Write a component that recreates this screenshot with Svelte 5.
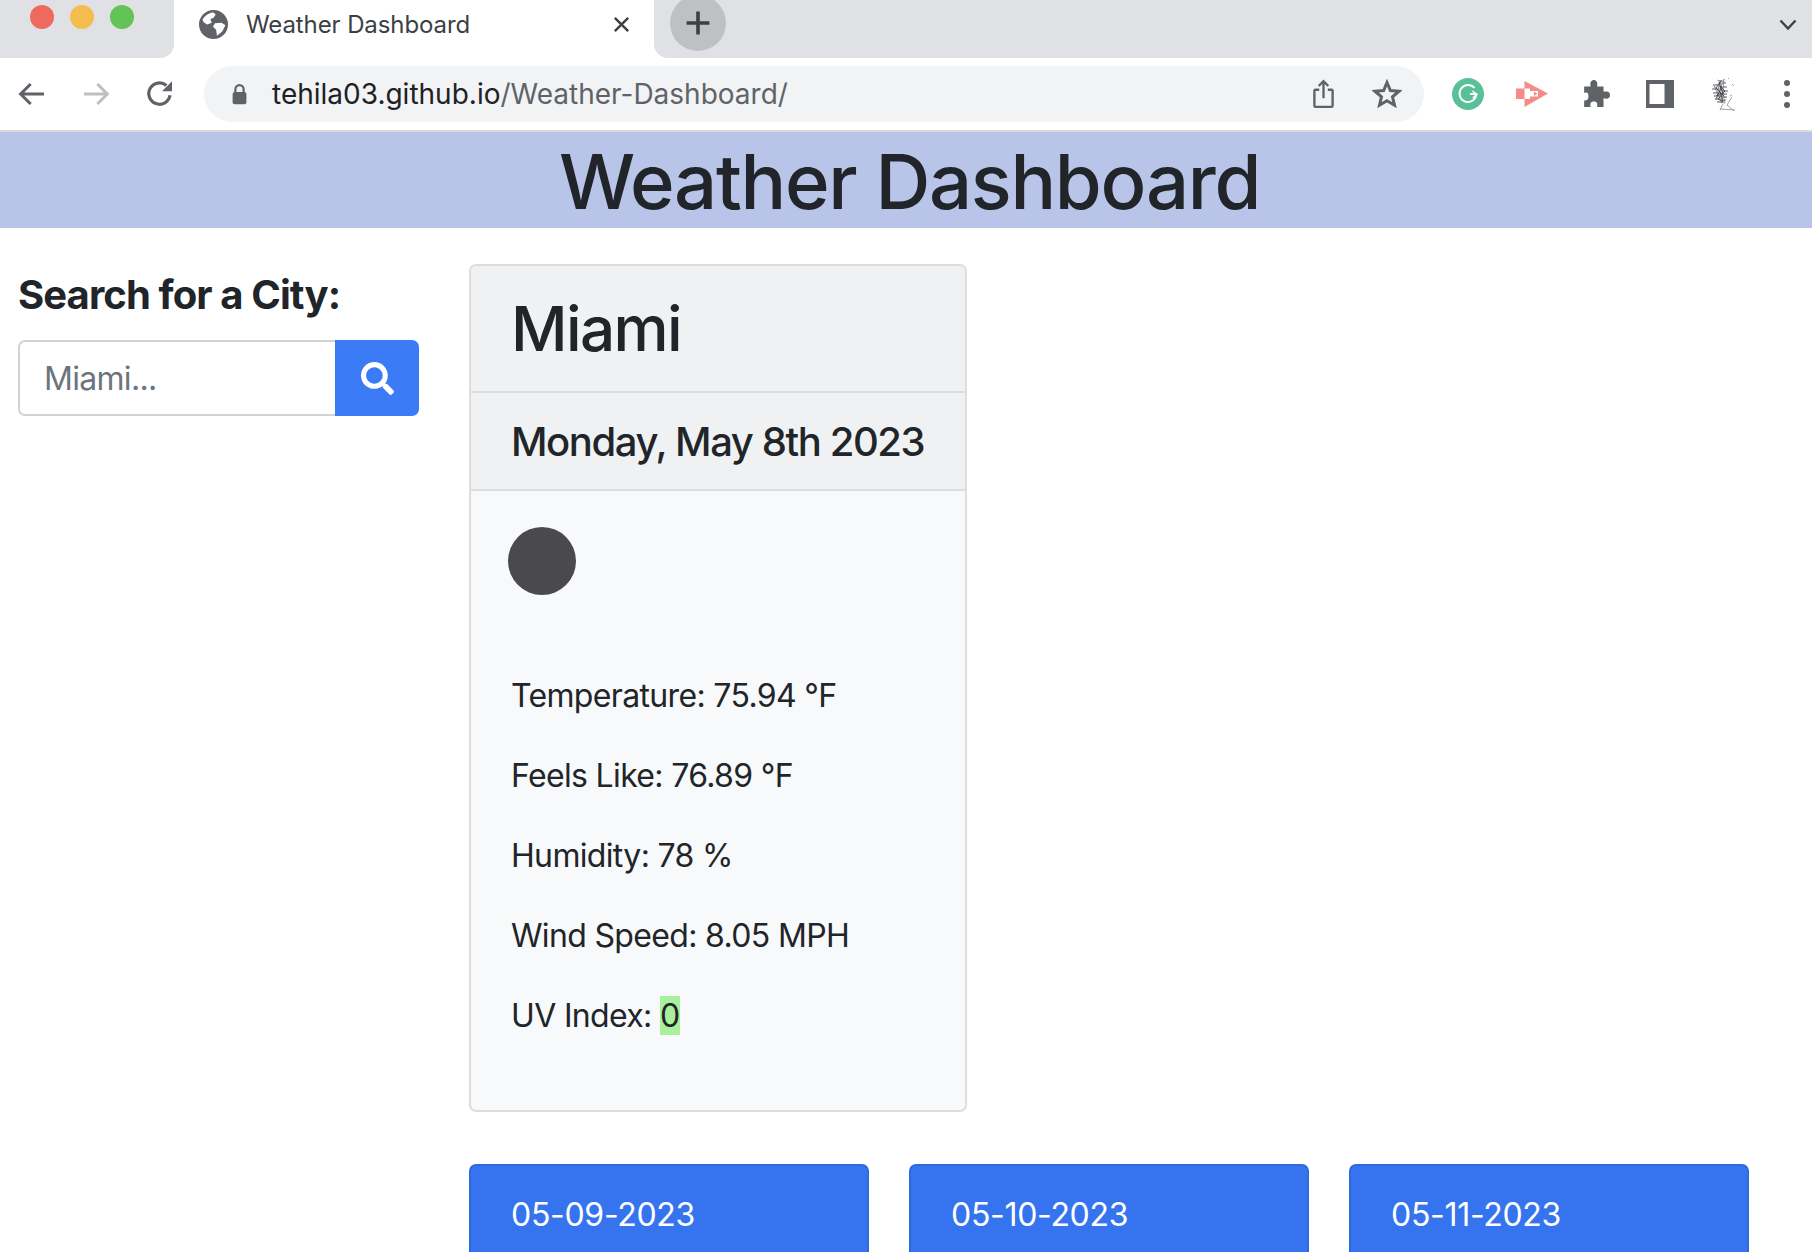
<script lang="ts">
	const details = [
		{ label: 'Temperature', value: '75.94 °F' },
		{ label: 'Feels Like', value: '76.89 °F' },
		{ label: 'Humidity', value: '78 %' },
		{ label: 'Wind Speed', value: '8.05 MPH' }
	];
	const forecast = ['05-09-2023', '05-10-2023', '05-11-2023'];
</script>

<div class="window">
	<div class="tabstrip">
		<div class="lights">
			<span class="light red"></span>
			<span class="light yellow"></span>
			<span class="light green"></span>
		</div>
		<div class="tab">
			<svg class="globe" viewBox="0 0 20 20" width="29" height="29">
				<circle cx="10" cy="10" r="10" fill="#5f6368" />
				<path d="M2.4 6.5 C4 4 6 2.5 9.5 1.6 L11.5 3 L10.2 5.2 L7.8 6.4 L8.8 8.8 L5.6 10 L3.2 8.4 Z" fill="#fff" />
				<path d="M11 9.2 L15.6 8.8 L18.2 10.6 L16 14.8 L12.4 17.8 L11.8 13.6 L9.6 11.6 Z" fill="#fff" />
			</svg>
			<span class="tab-title">Weather Dashboard</span>
			<svg class="tab-close" viewBox="0 0 14 14" width="17" height="17">
				<path d="M1.5 1.5 L12.5 12.5 M12.5 1.5 L1.5 12.5" stroke="#3c4043" stroke-width="2" />
			</svg>
		</div>
		<div class="newtab">
			<svg viewBox="0 0 20 20" width="24" height="24">
				<path d="M10 0.5 V19.5 M0.5 10 H19.5" stroke="#3c4043" stroke-width="3" />
			</svg>
		</div>
		<svg class="chevron" viewBox="0 0 18 12" width="18" height="12">
			<path d="M1.5 1.5 L9 9.5 L16.5 1.5" fill="none" stroke="#3c4043" stroke-width="2.4" />
		</svg>
	</div>

	<div class="toolbar">
		<svg class="nav" viewBox="0 0 24 24" width="32" height="32">
			<path d="M21 12 H4 M11 4.5 L3.5 12 L11 19.5" fill="none" stroke="#5f6368" stroke-width="2.3" />
		</svg>
		<svg class="nav" viewBox="0 0 24 24" width="32" height="32">
			<path d="M3 12 H20 M13 4.5 L20.5 12 L13 19.5" fill="none" stroke="#bdbfc2" stroke-width="2.3" />
		</svg>
		<svg class="nav" viewBox="0 0 24 24" width="32" height="32">
			<path d="M19.5 13 A8 8 0 1 1 16.8 5.6" fill="none" stroke="#5f6368" stroke-width="2.4" />
			<path d="M21 2.5 V10 H13.5 Z" fill="#5f6368" />
		</svg>
		<div class="omnibox">
			<svg class="lock" viewBox="0 0 12 16" width="17" height="22">
				<path d="M3 7 V4.5 A3 3 0 0 1 9 4.5 V7" fill="none" stroke="#5f6368" stroke-width="1.6" />
				<rect x="1" y="6.5" width="10" height="9" rx="1.5" fill="#5f6368" />
			</svg>
			<span class="url">tehila03.github.io<span class="url-path">/Weather-Dashboard/</span></span>
			<svg class="share" viewBox="0 0 20 28" width="23" height="30">
				<path d="M10 18 V2 M5.5 6.5 L10 2 L14.5 6.5 M6 10 H2.5 A1 1 0 0 0 1.5 11 V25 A1 1 0 0 0 2.5 26 H17.5 A1 1 0 0 0 18.5 25 V11 A1 1 0 0 0 17.5 10 H14" fill="none" stroke="#5f6368" stroke-width="2.2" />
			</svg>
			<svg class="star" viewBox="0 0 24 24" width="30" height="30">
				<path d="M12 2.8 L14.7 9.2 L21.6 9.8 L16.4 14.3 L18 21 L12 17.4 L6 21 L7.6 14.3 L2.4 9.8 L9.3 9.2 Z" fill="none" stroke="#5f6368" stroke-width="2.4" />
			</svg>
		</div>
		<div class="extensions">
			<svg viewBox="0 0 32 32" width="32" height="32">
				<circle cx="16" cy="16" r="16" fill="#5ac09a" />
				<path d="M22.5 10 A8.5 8.5 0 1 0 24.5 16 H18" fill="none" stroke="#fff" stroke-width="1.8" />
				<path d="M20.5 13 L24.5 16.5 L21 20" fill="none" stroke="#fff" stroke-width="1.6" />
			</svg>
			<svg viewBox="0 0 32 26" width="32" height="26">
				<path d="M0 7.5 H8.5 V0 L32 12.5 L8.5 26 V18 H0 Z" fill="#f48c8a" />
				<path d="M8.5 7.5 H14 V10 H22 V15.5 H14 V18 H8.5 Z" fill="#fff" />
				<path d="M18 10.5 L21.5 12.8 L18 15 Z" fill="#f48c8a" />
			</svg>
			<svg viewBox="0 0 26 26" width="28" height="28" class="slim">
				<path d="M2 6 H8 C7 2 9 0 11 0 C13 0 15 2 14 6 H20 V11 C24 10 26 11 26 14 C26 17 24 18 20 17 V25 H14 C15 21 13 20 11 20 C9 20 7 21 8 25 H2 V19 C5 19 6 18 6 15 C6 12 5 11 2 12 Z" fill="#5f6368" />
			</svg>
			<svg viewBox="0 0 28 28" width="28" height="28" class="slim">
				<path fill-rule="evenodd" d="M0 0 H28 V28 H0 Z M3.5 4 V24 H18.5 V4 Z" fill="#5f6368" />
			</svg>
			<svg viewBox="0 0 25 37" width="25" height="37" class="avatar">
				<path d="M6 4 L15 7 L2 9 L16 11 L1 13 L17 15 L2 17 L16 18 L3 20 L16 21 L4 23 L15 24 L6 26 L14 27 L9 4 L5 24 L13 3 L11 27 L3 10 L15 22" fill="none" stroke="#77797d" stroke-width="0.7" />
				<path d="M8 6 L10 13 L6 20 L12 17 L9 10 L14 15 L7 23 L12 26 L9 16 M11 4 L5 12 L13 20" fill="none" stroke="#3a3b3e" stroke-width="0.8" />
				<path d="M12 28 L9 34 M9 33 L24 34 M21 21 L16 29 L23 35 M17 2 L18 3 M21 8 L23 10 M19 20 L21 19" fill="none" stroke="#8a8c90" stroke-width="0.8" />
			</svg>
			<span class="dots"><i></i><i></i><i></i></span>
		</div>
	</div>

	<header class="banner">
		<h1>Weather Dashboard</h1>
	</header>

	<main class="page">
		<aside class="side">
			<h4>Search for a City:</h4>
			<div class="search">
				<input type="text" placeholder="Miami..." />
				<button aria-label="Search">
					<svg viewBox="0 0 512 512" width="33" height="33">
						<path fill="#fff" d="M505 442.7L405.3 343c-4.5-4.5-10.6-7-17-7H372c27.6-35.3 44-79.7 44-128C416 93.1 322.9 0 208 0S0 93.1 0 208s93.1 208 208 208c48.3 0 92.7-16.4 128-44v16.3c0 6.4 2.5 12.5 7 17l99.7 99.7c9.4 9.4 24.6 9.4 33.9 0l28.3-28.3c9.4-9.4 9.4-24.6.1-34zM208 336c-70.7 0-128-57.2-128-128 0-70.7 57.2-128 128-128 70.7 0 128 57.2 128 128 0 70.7-57.2 128-128 128z" />
					</svg>
				</button>
			</div>
		</aside>

		<section class="content">
			<div class="card">
				<div class="card-head city">Miami</div>
				<div class="card-head date">Monday, May 8th 2023</div>
				<div class="card-body">
					<div class="icon"></div>
					{#each details as d}
						<p>{d.label}: {d.value}</p>
					{/each}
					<p>UV Index: <span class="uv">0</span></p>
				</div>
			</div>

			<div class="forecast">
				{#each forecast as day}
					<div class="day">{day}</div>
				{/each}
			</div>
		</section>
	</main>
</div>

<style>
	:global(body) {
		margin: 0;
		background: #fff;
	}

	.window {
		height: 1252px;
		overflow: hidden;
		font-family: Inter, "Liberation Sans", sans-serif;
		color: #212529;
	}

	.tabstrip {
		height: 58px;
		background: #dfe1e5;
		display: flex;
		align-items: center;
		overflow: hidden;
	}

	.lights {
		width: 174px;
		display: flex;
		gap: 16px;
		padding-left: 30px;
		box-sizing: border-box;
		margin-top: -24px;
		flex: none;
	}

	.light {
		width: 24px;
		height: 24px;
		border-radius: 50%;
	}

	.red { background: #ee6a5f; }
	.yellow { background: #f5bd4f; }
	.green { background: #61c454; }

	.tab {
		position: relative;
		width: 480px;
		height: 58px;
		background: #fff;
		display: flex;
		align-items: center;
		padding: 0 24px 10px 25px;
		box-sizing: border-box;
		flex: none;
	}

	/* flared corners where the tab meets the toolbar */
	.tab::before,
	.tab::after {
		content: "";
		position: absolute;
		bottom: 0;
		width: 14px;
		height: 14px;
	}

	.tab::before {
		left: -14px;
		background: radial-gradient(circle at 0 0, #dfe1e5 13.5px, #fff 14.5px);
	}

	.tab::after {
		right: -14px;
		background: radial-gradient(circle at 100% 0, #dfe1e5 13.5px, #fff 14.5px);
	}

	.tab-title {
		margin-left: 18px;
		font-size: 24px;
		letter-spacing: -0.1px;
		color: #3c4043;
		flex: 1;
	}

	.newtab {
		width: 56px;
		height: 56px;
		border-radius: 50%;
		background: #bfc0c4;
		margin: -12px 0 0 16px;
		display: flex;
		align-items: center;
		justify-content: center;
		flex: none;
	}

	.chevron {
		margin-left: auto;
		margin-right: 15px;
		margin-top: -8px;
	}

	.toolbar {
		height: 74px;
		display: flex;
		align-items: center;
		padding: 0 0 0 16px;
		box-sizing: border-box;
		border-bottom: 2px solid #d9dadc;
	}

	.nav {
		margin-right: 32px;
		flex: none;
	}

	.nav:nth-child(3) {
		margin-right: 28px;
	}

	.omnibox {
		width: 1220px;
		height: 56px;
		border-radius: 28px;
		background: #f1f3f4;
		display: flex;
		align-items: center;
		padding: 0 22px 0 27px;
		box-sizing: border-box;
		flex: none;
	}

	.url {
		margin-left: 24px;
		font-size: 28px;
		color: #202124;
		flex: 1;
	}

	.url-path {
		color: #5f6368;
	}

	.star {
		margin-left: 37px;
	}

	.extensions {
		display: flex;
		align-items: center;
		gap: 32px;
		margin-left: 28px;
	}

	.slim {
		margin: 0 2px;
	}

	.avatar {
		margin: 0 3px;
	}

	.dots {
		width: 32px;
		display: flex;
		flex-direction: column;
		align-items: center;
		gap: 5px;
	}

	.dots i {
		width: 6px;
		height: 6px;
		border-radius: 50%;
		background: #5f6368;
	}

	.banner {
		height: 96px;
		background: #b8c5e8;
		text-align: center;
		padding-left: 7px;
	}

	h1 {
		margin: 0;
		font-size: 76px;
		font-weight: 500;
		letter-spacing: -1.3px;
		line-height: 98px;
	}

	.page {
		display: flex;
		padding: 36px 18px 0;
	}

	.side {
		width: 401px;
		flex: none;
		margin-right: 50px;
	}

	h4 {
		margin: 0 0 14px;
		font-size: 40px;
		font-weight: 700;
		letter-spacing: -0.9px;
		line-height: 62px;
	}

	.search {
		display: flex;
		height: 76px;
	}

	input {
		flex: 1;
		min-width: 0;
		border: 2px solid #ced4da;
		border-right: none;
		border-radius: 7px 0 0 7px;
		padding: 0 24px;
		font: 32px Inter, "Liberation Sans", sans-serif;
		letter-spacing: -0.7px;
		color: #495057;
		outline: none;
	}

	input::placeholder {
		color: #6c757d;
		opacity: 1;
	}

	button {
		width: 84px;
		border: none;
		border-radius: 0 7px 7px 0;
		background: #3b7bf6;
		display: flex;
		align-items: center;
		justify-content: center;
		padding: 0;
	}

	.content {
		flex: 1;
	}

	.card {
		width: 498px;
		height: 848px;
		box-sizing: border-box;
		border: 2px solid #dcdddf;
		border-radius: 7px;
		background: #f8f9fa;
	}

	.card-head {
		background: #f0f1f2;
		border-bottom: 2px solid #dcdddf;
		padding: 0 40px;
		box-sizing: border-box;
		display: flex;
		align-items: center;
		white-space: nowrap;
	}

	.city {
		height: 127px;
		font-size: 62px;
		font-weight: 500;
		letter-spacing: -1.6px;
		border-radius: 5px 5px 0 0;
	}

	.date {
		height: 98px;
		font-size: 40px;
		font-weight: 500;
		letter-spacing: -1.4px;
	}

	.card-body {
		padding: 36px 40px 0;
	}

	.icon {
		width: 68px;
		height: 68px;
		border-radius: 50%;
		background: #4a4a4c;
		margin: 0 0 77px -3px;
	}

	p {
		margin: 0 0 32px;
		font-size: 32px;
		line-height: 48px;
		letter-spacing: -0.66px;
	}

	.uv {
		background: #a8f09c;
	}

	.forecast {
		display: flex;
		gap: 40px;
		margin-top: 52px;
	}

	.day {
		width: 400px;
		height: 200px;
		box-sizing: border-box;
		background: #3574ee;
		border: 2px solid #306bdc;
		border-radius: 7px;
		color: #fff;
		font-size: 32px;
		line-height: 48px;
		letter-spacing: -0.3px;
		padding: 25px 40px;
	}
</style>
